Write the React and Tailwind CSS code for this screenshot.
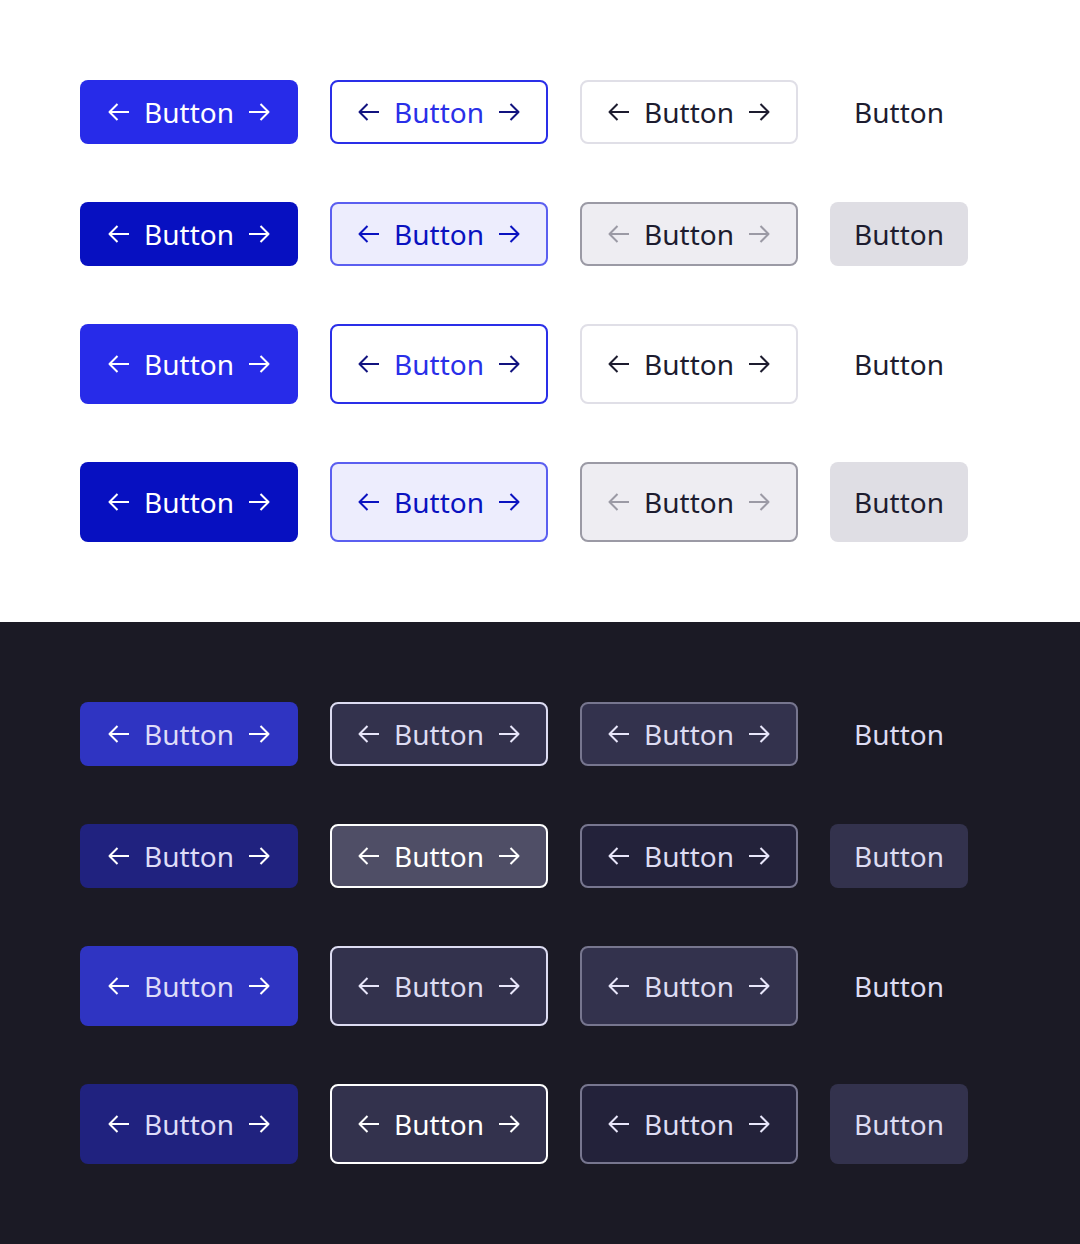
import React from 'react';

const Arrow = ({ dir = 'right', className = '' }) => (
  <svg width="22" height="18" viewBox="0 0 22 18" fill="none" className={className}>
    {dir === 'left' ? (
      <path d="M1.5 9H21M9.5 1L1.5 9l8 8" stroke="currentColor" strokeWidth="2" strokeLinejoin="round" />
    ) : (
      <path d="M20.5 9H1M12.5 1l8 8-8 8" stroke="currentColor" strokeWidth="2" strokeLinejoin="round" />
    )}
  </svg>
);

const Btn = ({ box, text, icon, tall }) => (
  <div
    className={`flex w-[218px] items-center justify-center gap-[14px] rounded-lg ${tall ? 'h-20' : 'h-16'} ${box}`}
  >
    <Arrow dir="left" className={icon} />
    <span className={text}>Button</span>
    <Arrow dir="right" className={icon} />
  </div>
);

const Ghost = ({ box, text, tall }) => (
  <div className={`flex w-[138px] items-center justify-center rounded-lg ${tall ? 'h-20' : 'h-16'} ${box}`}>
    <span className={text}>Button</span>
  </div>
);

const lightRows = [
  [
    { box: 'bg-[#272be9]', text: 'text-white', icon: 'text-white' },
    { box: 'bg-white border-2 border-[#2a2fe8]', text: 'text-[#2a2fe8]', icon: 'text-[#12137f]' },
    { box: 'bg-white border-2 border-[#e0dfe7]', text: 'text-[#1d1c2f]', icon: 'text-[#1d1c2f]' },
    { box: 'bg-transparent', text: 'text-[#1d1c2f]' },
  ],
  [
    { box: 'bg-[#0710c1]', text: 'text-white', icon: 'text-white' },
    { box: 'bg-[#ededfd] border-2 border-[#5b5ff0]', text: 'text-[#0a12c0]', icon: 'text-[#0a12c0]' },
    { box: 'bg-[#eeedf2] border-2 border-[#9b9aa5]', text: 'text-[#1d1c2f]', icon: 'text-[#9b9aa5]' },
    { box: 'bg-[#dfdee4]', text: 'text-[#1d1c2f]' },
  ],
];

const darkRows = [
  [
    { box: 'bg-[#2f34c2]', text: 'text-[#dedcf8]', icon: 'text-white' },
    { box: 'bg-[#33324d] border-2 border-[#dddcf2]', text: 'text-[#dddcf2]', icon: 'text-[#e8e6fa]' },
    { box: 'bg-[#33324d] border-2 border-[#77768f]', text: 'text-[#dddcf2]', icon: 'text-[#e8e6fa]' },
    { box: 'bg-transparent', text: 'text-[#dddcf2]' },
  ],
  [
    { box: 'bg-[#20227f]', text: 'text-[#dedcf8]', icon: 'text-white' },
    { box: 'bg-[#4f4e66] border-2 border-white', text: 'text-white', icon: 'text-white' },
    { box: 'bg-[#23223a] border-2 border-[#77768f]', text: 'text-[#dddcf2]', icon: 'text-[#e8e6fa]' },
    { box: 'bg-[#33324d]', text: 'text-[#dddcf2]' },
  ],
];

// dark row 4 keeps the same bg as row 3 but with a white outline
const darkRow4 = [
  { box: 'bg-[#20227f]', text: 'text-[#dedcf8]', icon: 'text-white' },
  { box: 'bg-[#33324d] border-2 border-white', text: 'text-white', icon: 'text-white' },
  { box: 'bg-[#23223a] border-2 border-[#77768f]', text: 'text-[#dddcf2]', icon: 'text-[#e8e6fa]' },
  { box: 'bg-[#33324d]', text: 'text-[#dddcf2]' },
];

const Row = ({ items, tall }) => (
  <div className="flex items-center gap-8">
    {items.slice(0, 3).map((it, i) => (
      <Btn key={i} {...it} tall={tall} />
    ))}
    <Ghost {...items[3]} tall={tall} />
  </div>
);

const App = () => {
  return (
    <div className="w-[1080px] text-[28px] leading-none" style={{ fontFamily: '"Noto Sans", sans-serif' }}>
      <div className="flex h-[622px] flex-col gap-[58px] bg-white px-20 py-20">
        <Row items={lightRows[0]} />
        <Row items={lightRows[1]} />
        <Row items={lightRows[0]} tall />
        <Row items={lightRows[1]} tall />
      </div>
      <div className="flex h-[622px] flex-col gap-[58px] bg-[#1b1a25] px-20 py-20">
        <Row items={darkRows[0]} />
        <Row items={darkRows[1]} />
        <Row items={darkRows[0]} tall />
        <Row items={darkRow4} tall />
      </div>
    </div>
  );
};

export default App;
